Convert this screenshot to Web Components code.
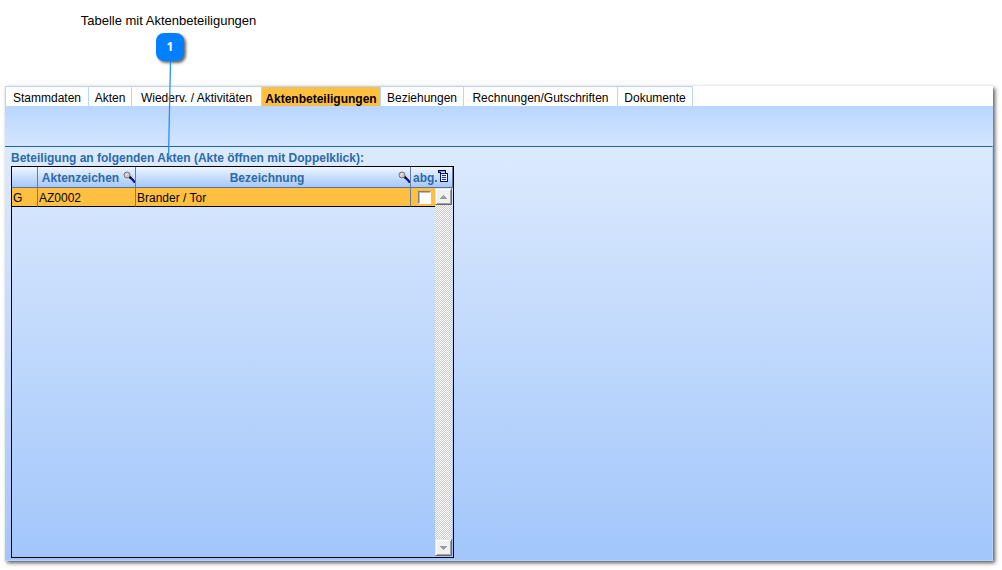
<!DOCTYPE html>
<html lang="de">
<head>
<meta charset="utf-8">
<title>Aktenbeteiligungen</title>
<style>
  body { margin: 0; font: 12px/20px "Liberation Sans", Arial, sans-serif; color: #000; background: #fff; }
</style>
</head>
<body>
<help-page>
  <call-out slot="note" number="1">Tabelle mit Aktenbeteiligungen</call-out>
  <tab-bar slot="tabs">
    <tab-item style="--w:83px">Stammdaten</tab-item>
    <tab-item style="--w:43px">Akten</tab-item>
    <tab-item style="--w:130px">Wiederv. / Aktivitäten</tab-item>
    <tab-item style="--w:119px" active>Aktenbeteiligungen</tab-item>
    <tab-item style="--w:83px">Beziehungen</tab-item>
    <tab-item style="--w:154px">Rechnungen/Gutschriften</tab-item>
    <tab-item style="--w:75px">Dokumente</tab-item>
  </tab-bar>
  <akten-grid></akten-grid>
</help-page>

<script>
class Base extends HTMLElement {
  constructor() {
    super();
    this.attachShadow({ mode: "open" }).innerHTML =
      "<style>*{box-sizing:border-box}" + this.constructor.css + "</style>" + this.constructor.html;
  }
}

class HelpPage extends Base {
  static css = `
    :host { display: flex; flex-direction: column; box-sizing: border-box; min-height: 100vh; padding: 10px 9px 9px 5px; }
    header { height: 76px; }
    main { flex: 1; display: flex; flex-direction: column; box-shadow: 2px 2px 4px rgba(0,0,0,.65); }
    .band { height: 40px; background: linear-gradient(#b9d6ff, #d3e5ff); }
    .panel { flex: 1; display: flex; flex-direction: column; padding: 2px 6px; border: solid #b4d2fd;
      border-width: 0 1px 1px 0; background: linear-gradient(#dceafd, #a2c6fb); border-top: 1px solid #1f66a8; }
  `;
  static html = `
    <header><slot name="note"></slot></header>
    <main>
      <slot name="tabs"></slot>
      <div class="band"></div>
      <section class="panel"><slot></slot></section>
    </main>`;
}

class CallOut extends Base {
  static css = `
    :host { display: flex; flex-direction: column; align-items: center; width: 200px; margin-left: 65px; position: relative; gap: 1px; }
    .text { font-size: 13px; line-height: 22px; white-space: nowrap; padding-right: 3px; }
    .badge { width: 28px; height: 28px; border-radius: 8px; background: #0080ff; color: #fff; font: bold 12px/28px "Open Sans", sans-serif;
      text-align: center; box-shadow: 2px 2px 3px rgba(0,0,0,.6); }
    svg { position: absolute; left: 90px; top: 51px; z-index: 2; pointer-events: none; }
  `;
  static html = `
    <span class="text"><slot></slot></span>
    <span class="badge"></span>
    <svg width="20" height="97" viewBox="0 0 20 97"><path d="M10.5 0 8.5 96" stroke="#2090ff" stroke-width="1.3"/></svg>`;
  connectedCallback() {
    this.shadowRoot.querySelector(".badge").textContent = this.getAttribute("number");
  }
}

class TabBar extends Base {
  static css = `
    :host { display: flex; height: 20px; background: #fff; border-left: 1px solid #b9d6ff; }
  `;
  static html = `<slot></slot>`;
}

class TabItem extends Base {
  static css = `
    :host { display: block; width: var(--w); }
    button { display: block; width: 100%; height: 20px; padding: 3px 0 0; border: solid #b9d6ff; border-width: 1px 1px 0 0;
      background: #fff; color: #000; font: inherit; line-height: 16px; text-align: center; white-space: nowrap; }
    :host([active]) button { background: #ffbf40; font-weight: bold; height: 21px; padding-top: 4px; }
  `;
  static html = `<button type="button"><slot></slot></button>`;
}

class SearchIcon extends Base {
  static css = `:host { display: block; width: 12px; height: 12px; } svg { display: block; }`;
  static html = `<svg width="12" height="12" viewBox="0 0 12 12">
    <path d="M6 5.500 12 11.500" stroke="#000" stroke-width="2.600"/>
    <path d="M7.500 7.500 11.500 11.500" stroke="#1414f0" stroke-width="1.800"/>
    <path d="M6 7.500 10 11.500" stroke="#f4f4fa" stroke-width="1"/>
    <circle cx="4" cy="4" r="3" fill="#c8c8c8" stroke="#777" stroke-width="1"/>
    <path d="M2.500 4.500 4.500 2.500" stroke="#fff"/></svg>`;
}

class MenuIcon extends Base {
  static css = `:host { display: block; width: 10px; height: 12px; } svg { display: block; }`;
  static html = `<svg width="10" height="12" viewBox="0 0 10 12" shape-rendering="crispEdges">
    <path d="M0 0h8v1H0zM0 1h1v2H0zM7 1h1v2H7z" fill="#000030"/><path d="M1 1h6v1H1z" fill="#7fa0e0"/><path d="M0 2h3v1H0z" fill="#000030"/>
    <path d="M2 3h8v9H2z" fill="#101060"/><path d="M3 4h6v7H3z" fill="#e8f0ff"/>
    <path d="M4 5h4v1H4zM4 7h4v1H4zM4 9h4v1H4z" fill="#2030a0"/></svg>`;
}

class ScrollTrack extends Base {
  static css = `
    :host { display: flex; flex-direction: column; justify-content: space-between; width: 17px;
      background: repeating-conic-gradient(#fff 0 25%, #c8c8c8 0 50%) 0 0 / 2px 2px; }
    button { display: grid; place-items: center; width: 17px; height: 17px; padding: 0; background: #f0f0f0;
      border: 1px solid; border-color: #e3e3e3 #696969 #696969 #e3e3e3; box-shadow: inset 1px 1px #fff, inset -1px -1px #a0a0a0; }
    svg { display: block; }
  `;
  static html = `
    <button type="button" aria-label="Nach oben"><svg width="7" height="4"><path d="M3 0h1v1h1v1h1v1h1v1H0V3h1V2h1V1h1z" fill="#9a9a9a" shape-rendering="crispEdges"/></svg></button>
    <button type="button" aria-label="Nach unten"><svg width="7" height="4"><path d="M0 0h7v1H6v1H5v1H4v1H3V3H2V2H1V1H0z" fill="#9a9a9a" shape-rendering="crispEdges"/></svg></button>`;
}

class AktenGrid extends Base {
  static css = `
    :host { flex: 1; display: flex; flex-direction: column; }
    h2 { margin: 0; height: 17px; font-size: 12px; line-height: 19px; color: #2d6aa8; }
    .box { flex: 1; position: relative; width: 443px; border: 1px solid #000; }
    table { width: 100%; table-layout: fixed; border-collapse: separate; border-spacing: 0; }
    th { height: 21px; padding: 0; color: #2d6aa8; background: linear-gradient(#eef5ff, #a5c8fa); border-right: 1px solid #6c7c96;
      border-bottom: 1px solid #5f7290; line-height: 18px; }
    .head { display: flex; align-items: center; justify-content: flex-end; height: 20px; }
    .head span { flex: 1; padding-top: 2px; text-align: center; }
    .last { justify-content: space-between; padding: 0 4px 0 2px; }
    .last span { flex: none; }
    .last menu-icon { margin-bottom: 2px; }
    td { height: 19px; padding: 2px 0 0 1px; background: #ffbf40; border-right: 1px solid #6c7c96; border-bottom: 1px solid #000; line-height: 16px; }
    td.abg { border-right: 0; padding: 0 0 0 7px; }
    td.rest { border: 0; background: none; }
    input { appearance: none; display: block; width: 13px; height: 13px; margin: 0; background: #fff; border: 1px solid;
      border-color: #808080 #fff #fff #808080; box-shadow: inset 1px 1px #b8b8b8; }
    scroll-track { position: absolute; right: 1px; top: 21px; bottom: 1px; }
  `;
  static html = `
    <h2>Beteiligung an folgenden Akten (Akte öffnen mit Doppelklick):</h2>
    <div class="box">
      <table>
        <colgroup><col style="width:26px"><col style="width:98px"><col style="width:275px"><col style="width:24px"><col></colgroup>
        <thead><tr>
          <th></th>
          <th><div class="head"><span>Aktenzeichen</span><search-icon></search-icon></div></th>
          <th><div class="head"><span>Bezeichnung</span><search-icon></search-icon></div></th>
          <th colspan="2"><div class="head last"><span>abg.</span><menu-icon></menu-icon></div></th>
        </tr></thead>
        <tbody><tr>
          <td>G</td><td>AZ0002</td><td>Brander / Tor</td>
          <td class="abg"><input type="checkbox" aria-label="abg."></td><td class="rest"></td>
        </tr></tbody>
      </table>
      <scroll-track></scroll-track>
    </div>`;
}

customElements.define("help-page", HelpPage);
customElements.define("call-out", CallOut);
customElements.define("tab-bar", TabBar);
customElements.define("tab-item", TabItem);
customElements.define("search-icon", SearchIcon);
customElements.define("menu-icon", MenuIcon);
customElements.define("scroll-track", ScrollTrack);
customElements.define("akten-grid", AktenGrid);
</script>
</body>
</html>
